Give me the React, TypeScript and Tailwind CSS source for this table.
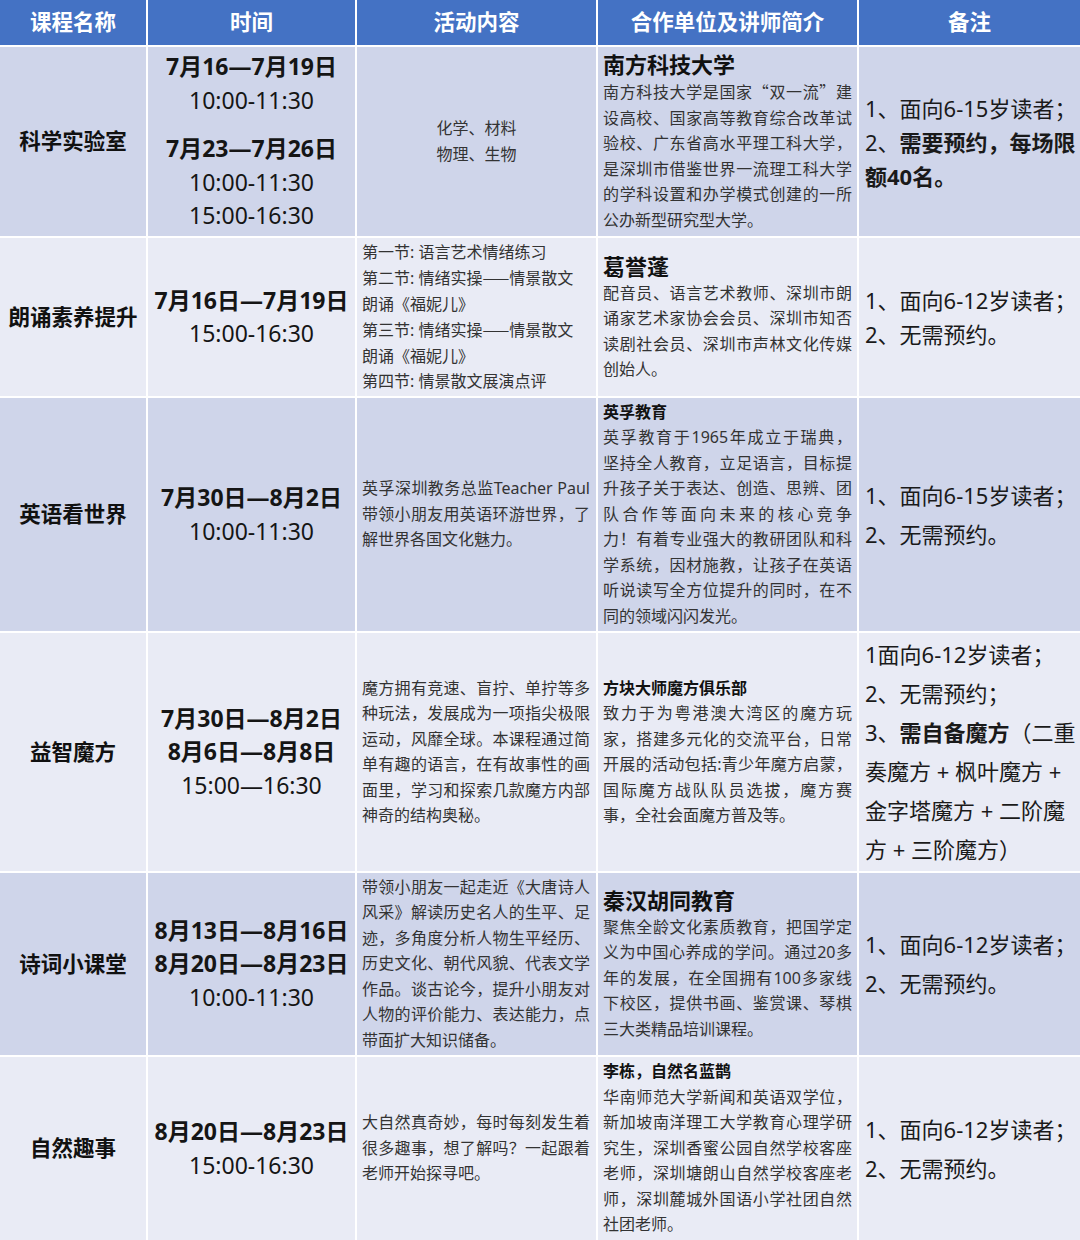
import React from 'react';

/**
 * 暑期课程安排表
 */

const DARK = 'bg-[#cfd5ea]';
const LIGHT = 'bg-[#e9ebf5]';

type TimeLine = { text: string; bold?: boolean };

// full-width quotes and dashes come from the CJK face
function cjk(s: string) {
  return s.split(/([“”—]+)/).map((part, i) =>
    /^[“”—]+$/.test(part) ? (
      <span key={i} className="font-[family-name:'Noto_Sans_CJK_SC',sans-serif]">
        {part}
      </span>
    ) : (
      part
    )
  );
}

function Cell({ band, className = '', children }: { band: string; className?: string; children?: React.ReactNode }) {
  return <div className={`${band} flex flex-col justify-center ${className}`}>{children}</div>;
}

// justified block of hand-broken lines; the last one stays left
function Para({ lines, className = '' }: { lines: string[]; className?: string }) {
  return (
    <div className={className}>
      {lines.map((l, i) => (
        <div
          key={i}
          className={
            i < lines.length - 1 ? 'whitespace-nowrap text-justify [text-align-last:justify]' : 'whitespace-nowrap text-left'
          }
        >
          {cjk(l)}
        </div>
      ))}
    </div>
  );
}

function Name({ band, children }: { band: string; children: React.ReactNode }) {
  return (
    <Cell band={band} className="items-center text-center text-[21.5px] font-bold text-[#111]">
      {children}
    </Cell>
  );
}

function Times({ band, groups }: { band: string; groups: TimeLine[][] }) {
  return (
    <Cell band={band} className="items-center text-center text-[23px] leading-[33.5px] text-[#151515]">
      {groups.map((g, gi) => (
        <div key={gi} className={gi > 0 ? 'mt-[15px]' : ''}>
          {g.map((t, i) => (
            <div key={i} className={t.bold ? 'font-bold' : 'font-normal'}>
              {t.text}
            </div>
          ))}
        </div>
      ))}
    </Cell>
  );
}

function Activity({ band, lines }: { band: string; lines: string[] }) {
  return (
    <Cell band={band} className="px-[5px] pr-[6px] text-[16px] leading-[25.5px] text-[#333]">
      <Para lines={lines} />
    </Cell>
  );
}

function Partner({ band, title, big, lines }: { band: string; title: string; big?: boolean; lines: string[] }) {
  return (
    <Cell band={band} className="pl-[5px] pr-[5px] text-[16px] leading-[25.5px] text-[#333]">
      <div
        className={
          big ? 'text-[22px] leading-[29px] font-bold text-[#111]' : 'text-[16px] leading-[25.5px] font-bold text-[#111]'
        }
      >
        {title}
      </div>
      <Para lines={lines} />
    </Cell>
  );
}

function Remarks({ band, tall, children }: { band: string; tall?: boolean; children: React.ReactNode }) {
  return (
    <Cell
      band={band}
      className={`pl-[6px] text-[22px] text-[#1a1a1a] whitespace-nowrap ${tall ? 'leading-[39px]' : 'leading-[34px]'}`}
    >
      {children}
    </Cell>
  );
}

const HEADERS = ['课程名称', '时间', '活动内容', '合作单位及讲师简介', '备注'];

export default function App() {
  return (
    <div className="w-[1080px] h-[1240px] overflow-hidden bg-white font-[family-name:'Noto_Sans','Noto_Sans_CJK_SC',sans-serif]">
      <div className="grid grid-cols-[146px_207px_239px_259px_1fr] grid-rows-[45px_189px_158px_233px_238px_182px_183px] gap-[2px] bg-white">
        {/* Header */}
        {HEADERS.map((h) => (
          <div key={h} className="bg-[#4472c4] flex items-center justify-center text-[21.5px] font-bold text-white">
            {h}
          </div>
        ))}

        {/* 科学实验室 */}
        <Name band={DARK}>科学实验室</Name>
        <Times
          band={DARK}
          groups={[
            [{ text: '7月16—7月19日', bold: true }, { text: '10:00-11:30' }],
            [{ text: '7月23—7月26日', bold: true }, { text: '10:00-11:30' }, { text: '15:00-16:30' }],
          ]}
        />
        <Cell band={DARK} className="items-center text-center text-[16px] leading-[25.5px] text-[#333]">
          <div>化学、材料</div>
          <div>物理、生物</div>
        </Cell>
        <Partner
          band={DARK}
          title="南方科技大学"
          big
          lines={[
            '南方科技大学是国家“双一流”建',
            '设高校、国家高等教育综合改革试',
            '验校、广东省高水平理工科大学，',
            '是深圳市借鉴世界一流理工科大学',
            '的学科设置和办学模式创建的一所',
            '公办新型研究型大学。',
          ]}
        />
        <Remarks band={DARK}>
          <div>1、面向6-15岁读者；</div>
          <div>
            2、<span className="font-bold">需要预约，每场限</span>
          </div>
          <div className="font-bold">额40名。</div>
        </Remarks>

        {/* 朗诵素养提升 */}
        <Name band={LIGHT}>朗诵素养提升</Name>
        <Times band={LIGHT} groups={[[{ text: '7月16日—7月19日', bold: true }, { text: '15:00-16:30' }]]} />
        <Cell band={LIGHT} className="px-[5px] text-[16px] leading-[25.5px] text-[#333] whitespace-nowrap">
          <div>第一节: 语言艺术情绪练习</div>
          <div>{cjk('第二节: 情绪实操——情景散文')}</div>
          <div>朗诵《福妮儿》</div>
          <div>{cjk('第三节: 情绪实操——情景散文')}</div>
          <div>朗诵《福妮儿》</div>
          <div>第四节: 情景散文展演点评</div>
        </Cell>
        <Partner
          band={LIGHT}
          title="葛誉蓬"
          big
          lines={[
            '配音员、语言艺术教师、深圳市朗',
            '诵家艺术家协会会员、深圳市知否',
            '读剧社会员、深圳市声林文化传媒',
            '创始人。',
          ]}
        />
        <Remarks band={LIGHT}>
          <div>1、面向6-12岁读者；</div>
          <div>2、无需预约。</div>
        </Remarks>

        {/* 英语看世界 */}
        <Name band={DARK}>英语看世界</Name>
        <Times band={DARK} groups={[[{ text: '7月30日—8月2日', bold: true }, { text: '10:00-11:30' }]]} />
        <Activity
          band={DARK}
          lines={['英孚深圳教务总监Teacher Paul', '带领小朋友用英语环游世界，了', '解世界各国文化魅力。']}
        />
        <Partner
          band={DARK}
          title="英孚教育"
          lines={[
            '英孚教育于1965年成立于瑞典，',
            '坚持全人教育，立足语言，目标提',
            '升孩子关于表达、创造、思辨、团',
            '队合作等面向未来的核心竞争',
            '力！有着专业强大的教研团队和科',
            '学系统，因材施教，让孩子在英语',
            '听说读写全方位提升的同时，在不',
            '同的领域闪闪发光。',
          ]}
        />
        <Remarks band={DARK} tall>
          <div>1、面向6-15岁读者；</div>
          <div>2、无需预约。</div>
        </Remarks>

        {/* 益智魔方 */}
        <Name band={LIGHT}>益智魔方</Name>
        <Times
          band={LIGHT}
          groups={[
            [
              { text: '7月30日—8月2日', bold: true },
              { text: '8月6日—8月8日', bold: true },
              { text: '15:00—16:30' },
            ],
          ]}
        />
        <Activity
          band={LIGHT}
          lines={[
            '魔方拥有竞速、盲拧、单拧等多',
            '种玩法，发展成为一项指尖极限',
            '运动，风靡全球。本课程通过简',
            '单有趣的语言，在有故事性的画',
            '面里，学习和探索几款魔方内部',
            '神奇的结构奥秘。',
          ]}
        />
        <Partner
          band={LIGHT}
          title="方块大师魔方俱乐部"
          lines={[
            '致力于为粤港澳大湾区的魔方玩',
            '家，搭建多元化的交流平台，日常',
            '开展的活动包括:青少年魔方启蒙，',
            '国际魔方战队队员选拔，魔方赛',
            '事，全社会面魔方普及等。',
          ]}
        />
        <Remarks band={LIGHT} tall>
          <div>1面向6-12岁读者；</div>
          <div>2、无需预约；</div>
          <div>
            3、<span className="font-bold">需自备魔方</span>（二重
          </div>
          <div>奏魔方 + 枫叶魔方 +</div>
          <div>金字塔魔方 + 二阶魔</div>
          <div>方 + 三阶魔方）</div>
        </Remarks>

        {/* 诗词小课堂 */}
        <Name band={DARK}>诗词小课堂</Name>
        <Times
          band={DARK}
          groups={[
            [
              { text: '8月13日—8月16日', bold: true },
              { text: '8月20日—8月23日', bold: true },
              { text: '10:00-11:30' },
            ],
          ]}
        />
        <Activity
          band={DARK}
          lines={[
            '带领小朋友一起走近《大唐诗人',
            '风采》解读历史名人的生平、足',
            '迹，多角度分析人物生平经历、',
            '历史文化、朝代风貌、代表文学',
            '作品。谈古论今，提升小朋友对',
            '人物的评价能力、表达能力，点',
            '带面扩大知识储备。',
          ]}
        />
        <Partner
          band={DARK}
          title="秦汉胡同教育"
          big
          lines={[
            '聚焦全龄文化素质教育，把国学定',
            '义为中国心养成的学问。通过20多',
            '年的发展，在全国拥有100多家线',
            '下校区，提供书画、鉴赏课、琴棋',
            '三大类精品培训课程。',
          ]}
        />
        <Remarks band={DARK} tall>
          <div>1、面向6-12岁读者；</div>
          <div>2、无需预约。</div>
        </Remarks>

        {/* 自然趣事 */}
        <Name band={LIGHT}>自然趣事</Name>
        <Times band={LIGHT} groups={[[{ text: '8月20日—8月23日', bold: true }, { text: '15:00-16:30' }]]} />
        <Activity
          band={LIGHT}
          lines={['大自然真奇妙，每时每刻发生着', '很多趣事，想了解吗？一起跟着', '老师开始探寻吧。']}
        />
        <Partner
          band={LIGHT}
          title="李栋，自然名蓝鹊"
          lines={[
            '华南师范大学新闻和英语双学位，',
            '新加坡南洋理工大学教育心理学研',
            '究生，深圳香蜜公园自然学校客座',
            '老师，深圳塘朗山自然学校客座老',
            '师，深圳麓城外国语小学社团自然',
            '社团老师。',
          ]}
        />
        <Remarks band={LIGHT} tall>
          <div>1、面向6-12岁读者；</div>
          <div>2、无需预约。</div>
        </Remarks>
      </div>
    </div>
  );
}
